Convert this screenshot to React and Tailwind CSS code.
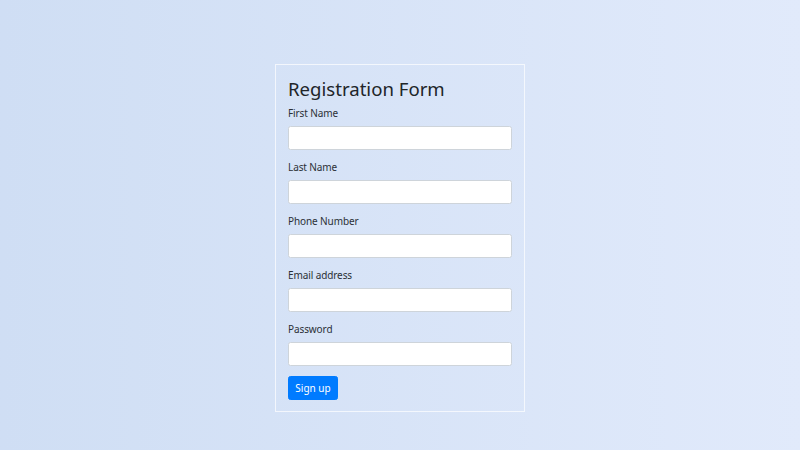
import { useState } from 'react';

const fields = [
  { id: 'firstName', label: 'First Name', type: 'text' },
  { id: 'lastName', label: 'Last Name', type: 'text' },
  { id: 'phone', label: 'Phone Number', type: 'tel' },
  { id: 'email', label: 'Email address', type: 'email' },
  { id: 'password', label: 'Password', type: 'password' },
];

const App = () => {
  const [formData, setFormData] = useState({});

  return (
    <div
      className="w-[800px] h-[450px] overflow-hidden bg-gradient-to-r from-[#cfdef4] to-[#e1eafb] text-[#212529]"
      style={{ fontFamily: '"Noto Sans", "Open Sans", sans-serif' }}
    >
      <form
        onSubmit={(e) => e.preventDefault()}
        className="w-[250px] mx-auto mt-[64px] px-[12px] pt-[12px] pb-[11px] border border-white/70"
      >
        <h2 className="text-[18.6px] leading-[24px] font-normal mb-[5px]">Registration Form</h2>

        {fields.map((f) => (
          <div key={f.id} className="mb-[10px]">
            <label htmlFor={f.id} className="block text-[10px] tracking-[-0.1px] leading-[15px] mb-[5px] text-[#2b3036]">
              {f.label}
            </label>
            <input
              id={f.id}
              type={f.type}
              className="block w-full h-[24px] px-[7px] text-[10px] bg-white border border-[#ced4da] rounded-[2.5px] outline-none"
              value={formData[f.id] || ''}
              onChange={(e) => setFormData({ ...formData, [f.id]: e.target.value })}
            />
          </div>
        ))}

        <button
          type="submit"
          className="block h-[24px] w-[50px] text-[10px] leading-[15px] text-white bg-[#007bff] border border-[#007bff] rounded-[2.5px]"
        >
          Sign up
        </button>
      </form>
    </div>
  );
};

export default App;
